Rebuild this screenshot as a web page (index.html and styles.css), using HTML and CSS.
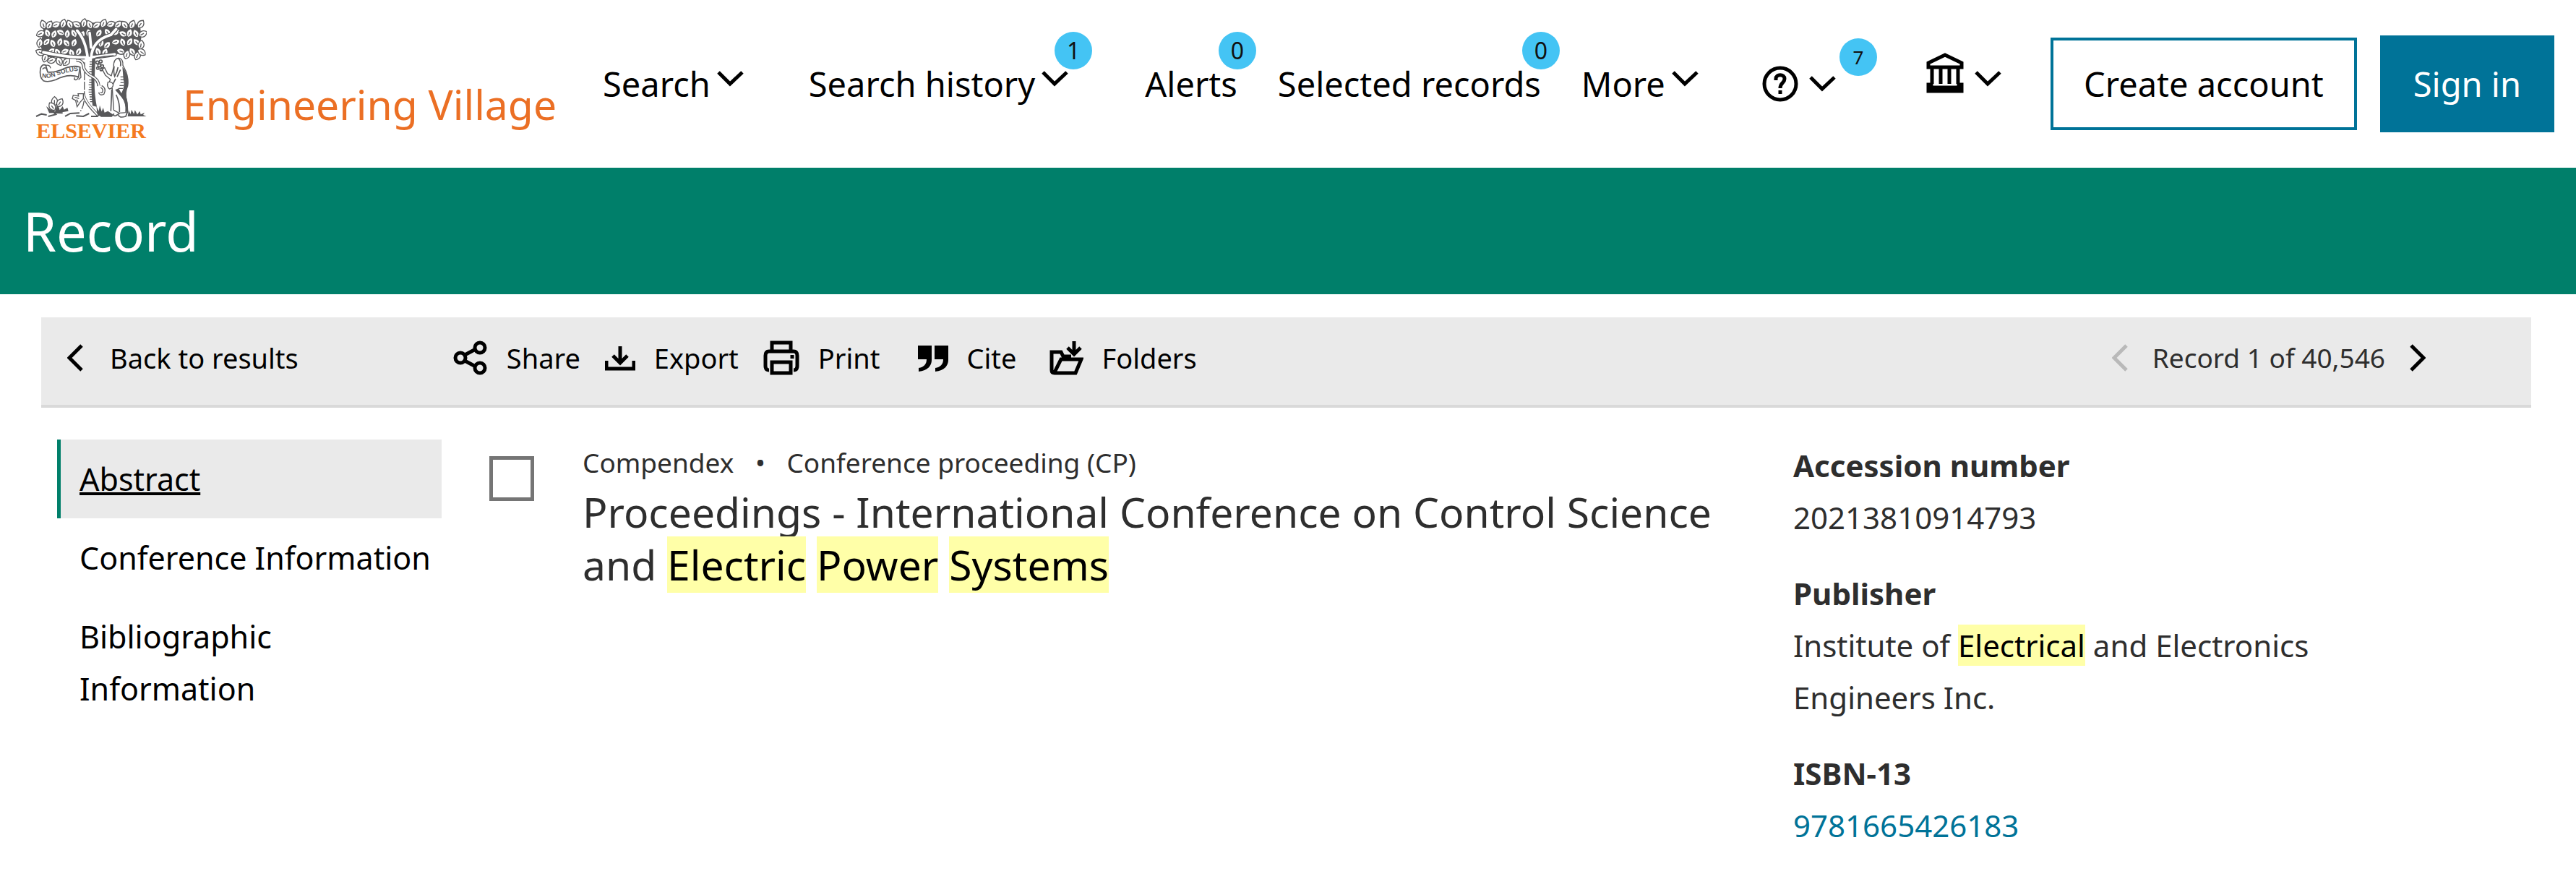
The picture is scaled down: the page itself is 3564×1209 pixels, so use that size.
FILE: index.html
```
<!DOCTYPE html>
<html lang="en">
<head>
    <meta charset="UTF-8">
    <meta name="viewport" content="width=device-width, initial-scale=1.0">
    <title>Record - Engineering Village</title>
    <link rel="stylesheet" href="styles.css">
</head>
<body>

    <header class="header">
        <a class="brand" href="#">
            <span class="logo">
                <svg class="tree" viewBox="27 38 462 412" aria-hidden="true">
                    <defs>
                        <path id="leaf" d="M0 -20 C17 -8 17 8 0 18 C-16 8 -16 -8 0 -20 Z M0 -6 L0 10" fill="#fff" stroke="#58585a" stroke-width="4"/>
                        <path id="banner-line" d="M54 285 Q84 290 120 276 T200 257"/>
                    </defs>
                    <!-- crown -->
                    <path d="M62 66 L110 62 L150 58 L230 56 L310 58 L350 64 L430 62 L462 66 L466 124 L458 150 L464 184 L446 196 L420 188 L384 190 L350 184 L270 196 L190 200 L150 206 L100 200 L66 200 L56 180 L48 150 L56 110 Z" fill="#58585a"/>
                    <g>
                        <use href="#leaf" transform="translate(60 66) rotate(-18)"/>
                        <use href="#leaf" transform="translate(84 68) rotate(30)"/>
                        <use href="#leaf" transform="translate(112 66) rotate(65)"/>
                        <use href="#leaf" transform="translate(142 62) rotate(18)"/>
                        <use href="#leaf" transform="translate(170 65) rotate(-28)"/>
                        <use href="#leaf" transform="translate(199 66) rotate(-60)"/>
                        <use href="#leaf" transform="translate(228 60) rotate(12)"/>
                        <use href="#leaf" transform="translate(252 66) rotate(-25)"/>
                        <use href="#leaf" transform="translate(280 68) rotate(58)"/>
                        <use href="#leaf" transform="translate(309 61) rotate(24)"/>
                        <use href="#leaf" transform="translate(339 64) rotate(70)"/>
                        <use href="#leaf" transform="translate(370 65) rotate(48)"/>
                        <use href="#leaf" transform="translate(398 68) rotate(-35)"/>
                        <use href="#leaf" transform="translate(428 66) rotate(24)"/>
                        <use href="#leaf" transform="translate(463 64) rotate(36)"/>
                        <use href="#leaf" transform="translate(48 103) rotate(65)"/>
                        <use href="#leaf" transform="translate(77 101) rotate(-20)"/>
                        <use href="#leaf" transform="translate(104 105) rotate(26)"/>
                        <use href="#leaf" transform="translate(132 98) rotate(-65)"/>
                        <use href="#leaf" transform="translate(159 104) rotate(8)"/>
                        <use href="#leaf" transform="translate(187 102) rotate(-30)"/>
                        <use href="#leaf" transform="translate(220 108) rotate(25)"/>
                        <use href="#leaf" transform="translate(248 101) rotate(-8)"/>
                        <use href="#leaf" transform="translate(290 101) rotate(32)"/>
                        <use href="#leaf" transform="translate(326 98) rotate(-30)"/>
                        <use href="#leaf" transform="translate(360 97) rotate(55)"/>
                        <use href="#leaf" transform="translate(391 104) rotate(-62)"/>
                        <use href="#leaf" transform="translate(417 101) rotate(20)"/>
                        <use href="#leaf" transform="translate(444 103) rotate(-25)"/>
                        <use href="#leaf" transform="translate(472 104) rotate(62)"/>
                        <use href="#leaf" transform="translate(45 142) rotate(12)"/>
                        <use href="#leaf" transform="translate(73 137) rotate(42)"/>
                        <use href="#leaf" transform="translate(99 144) rotate(-22)"/>
                        <use href="#leaf" transform="translate(128 138) rotate(20)"/>
                        <use href="#leaf" transform="translate(156 142) rotate(-40)"/>
                        <use href="#leaf" transform="translate(187 141) rotate(22)"/>
                        <use href="#leaf" transform="translate(299 142) rotate(12)"/>
                        <use href="#leaf" transform="translate(324 151) rotate(38)"/>
                        <use href="#leaf" transform="translate(360 137) rotate(76)"/>
                        <use href="#leaf" transform="translate(389 139) rotate(-18)"/>
                        <use href="#leaf" transform="translate(418 137) rotate(32)"/>
                        <use href="#leaf" transform="translate(447 139) rotate(-42)"/>
                        <use href="#leaf" transform="translate(465 150) rotate(10)"/>
                        <use href="#leaf" transform="translate(47 181) rotate(-65)"/>
                        <use href="#leaf" transform="translate(67 203) rotate(14)"/>
                        <use href="#leaf" transform="translate(93 176) rotate(52)"/>
                        <use href="#leaf" transform="translate(119 181) rotate(-30)"/>
                        <use href="#leaf" transform="translate(149 176) rotate(68)"/>
                        <use href="#leaf" transform="translate(177 184) rotate(-18)"/>
                        <use href="#leaf" transform="translate(206 178) rotate(24)"/>
                        <use href="#leaf" transform="translate(287 178) rotate(-20)"/>
                        <use href="#leaf" transform="translate(315 181) rotate(25)"/>
                        <use href="#leaf" transform="translate(382 176) rotate(-72)"/>
                        <use href="#leaf" transform="translate(406 190) rotate(18)"/>
                        <use href="#leaf" transform="translate(429 178) rotate(-32)"/>
                        <use href="#leaf" transform="translate(450 194) rotate(22)"/>
                        <use href="#leaf" transform="translate(468 180) rotate(-55)"/>
                        <use href="#leaf" transform="translate(94 213) rotate(68)"/>
                        <use href="#leaf" transform="translate(126 218) rotate(-24)"/>
                        <use href="#leaf" transform="translate(155 220) rotate(40)"/>
                    </g>
                    <!-- branches -->
                    <g fill="none" stroke="#58585a" stroke-width="18" stroke-linecap="round">
                        <path d="M244 205 Q236 130 200 90 M258 205 Q262 130 340 108 L362 84 M240 200 Q180 205 60 180 M264 200 Q320 194 356 188 M258 160 L252 100"/>
                    </g>
                    <g fill="none" stroke="#fff" stroke-width="11" stroke-linecap="round">
                        <path d="M244 205 Q236 130 200 90 M258 205 Q262 130 340 108 L362 84 M240 200 Q180 205 60 180 M264 200 Q320 194 356 188 M258 160 L252 100"/>
                    </g>
                    <!-- trunk -->
                    <path d="M232 200 L268 198 L272 300 Q270 360 276 408 L290 442 L226 438 Q236 400 232 330 Z" fill="#fff"/>
                    <path d="M231 222 L230 345 Q232 400 214 424" fill="none" stroke="#58585a" stroke-width="4" stroke-dasharray="34 6"/>
                    <path d="M262 206 L276 204 L272 300 Q272 360 282 406 L264 402 Q256 330 262 206 Z" fill="#58585a"/>
                    <path d="M252 220H266M252 230H266M250 240H266M252 250H266M250 260H266M250 295H266M250 305H266M248 315H266M250 325H266M248 335H266M248 345H266M250 355H266M252 365H266M252 375H266M254 385H266" stroke="#58585a" stroke-width="4"/>
                    <!-- vine -->
                    <path d="M196 214 Q226 210 228 246 Q238 268 262 280 Q288 292 290 320 M300 322 Q318 332 308 350 Q296 356 294 346" fill="none" stroke="#58585a" stroke-width="13"/>
                    <path d="M196 214 Q226 210 228 246 Q238 268 262 280 Q288 292 292 324" fill="none" stroke="#fff" stroke-width="6"/>
                    <path d="M300 322 Q318 332 308 350 Q296 356 294 346" fill="none" stroke="#fff" stroke-width="5"/>
                    <path d="M226 352 Q232 390 290 444" fill="none" stroke="#58585a" stroke-width="12"/>
                    <path d="M226 354 Q234 388 286 440" fill="none" stroke="#fff" stroke-width="6"/>
                    <path d="M226 352 L204 352 L206 362 L184 358 L180 372 L194 380 L200 406 L212 388 L226 372 Z" fill="#fff" stroke="#58585a" stroke-width="4"/>
                    <path d="M190 366 L208 372 M198 376 L204 388" stroke="#58585a" stroke-width="4"/>
                    <!-- banner -->
                    <path d="M78 262 L70 234 Q56 226 48 246 Q42 284 60 298 Q80 306 112 294 Q160 268 206 282 L212 242 Q190 232 150 246 Q110 266 78 262 Z" fill="#fff" stroke="#58585a" stroke-width="5"/>
                    <path d="M56 250 Q70 236 76 256 M70 234 Q86 230 90 246 M206 282 Q200 300 188 292 L190 284 M212 242 L216 284 L206 294" fill="none" stroke="#58585a" stroke-width="4"/>
                    <text class="banner-text"><textPath href="#banner-line">NON SOLUS</textPath></text>
                    <!-- old man -->
                    <path d="M352 240 Q350 206 374 204 Q392 208 390 234 L404 262 Q414 290 410 320 Q396 350 406 382 L410 430 L374 432 L352 420 L346 330 L328 320 L338 292 L318 276 L304 250 L314 244 L326 268 L342 278 Z" fill="#fff" stroke="#58585a" stroke-width="4" stroke-linejoin="round"/>
                    <path d="M388 240 Q416 276 412 312 Q396 348 410 390 L412 424 L400 430 Q404 390 384 366 L358 336 L372 330 L384 350 Q400 320 392 290 Z" fill="#58585a"/>
                    <path d="M354 238 Q350 262 356 280 Q366 262 370 242 M372 206 Q384 218 380 238 M360 290 Q352 306 346 318 M366 282 L380 252 M344 334 L340 424 M362 356 Q378 390 376 428" fill="none" stroke="#58585a" stroke-width="5"/>
                    <path d="M380 282H394M380 294H394M380 306H394M376 318H394M372 330H390" stroke="#58585a" stroke-width="4"/>
                    <path d="M328 304 Q344 300 350 314 Q348 330 334 332 Q322 322 328 304 Z" fill="#fff" stroke="#58585a" stroke-width="4"/>
                    <!-- grapes -->
                    <g fill="none" stroke="#58585a" stroke-width="5">
                        <circle cx="284" cy="222" r="6"/><circle cx="298" cy="218" r="6"/><circle cx="292" cy="234" r="6"/><circle cx="304" cy="238" r="6"/><circle cx="286" cy="246" r="5"/><circle cx="300" cy="252" r="5"/>
                    </g>
                    <path d="M276 204 Q310 196 352 194" stroke="#58585a" stroke-width="5" fill="none"/>
                    <!-- ground -->
                    <path d="M30 446 L52 436 L74 440 M80 446 L112 438 L104 430 L140 432 M150 446 L172 434 L210 432 M196 444 L226 446 L250 434 M258 446 L286 446" fill="none" stroke="#58585a" stroke-width="6"/>
                    <path d="M284 438 L280 404 L290 424 L294 400 L302 426 L308 410 L314 430 L328 424 L352 440 L344 448 L300 448 Z" fill="#58585a"/>
                    <path d="M410 446 L414 422 L422 436 L426 418 L436 436 L440 420 L450 438 L460 424 L464 438 L480 430 L474 440 L488 446 Z" fill="#58585a"/>
                    <path d="M352 434 Q350 448 362 442 L376 434 M372 440 Q374 454 402 446 L408 430" fill="#fff" stroke="#58585a" stroke-width="5"/>
                    <path d="M84 432 L72 404 L92 420 L96 400 L108 428 L118 388 L128 420 L140 404 L146 418 L160 410 L164 424 L120 432 Z" fill="#58585a"/>
                    <use href="#leaf" transform="translate(106 384)"/>
                    <use href="#leaf" transform="translate(128 390) rotate(30)"/>
                    <use href="#leaf" transform="translate(97 406) rotate(-35)"/>
                </svg>
                <span class="logo-name">ELSEVIER</span>
            </span>
            <span class="product-name">Engineering Village</span>
        </a>

        <nav class="main-nav">
            <button class="nav-item" type="button">Search
                <svg class="chevron" viewBox="0 0 37 22"><path d="M2 2 L18 18 L35 2"/></svg>
            </button>
            <button class="nav-item history" type="button">Search history
                <svg class="chevron" viewBox="0 0 37 22"><path d="M2 2 L18 18 L35 2"/></svg>
                <span class="badge badge-history">1</span>
            </button>
            <a class="nav-item alerts" href="#">Alerts<span class="badge">0</span></a>
            <a class="nav-item selected" href="#">Selected records<span class="badge">0</span></a>
            <button class="nav-item more" type="button">More
                <svg class="chevron" viewBox="0 0 37 22"><path d="M2 2 L18 18 L35 2"/></svg>
            </button>
        </nav>

        <div class="account-nav">
            <button class="nav-item help" type="button" aria-label="Help">
                <svg class="help-icon" viewBox="0 0 50 50">
                    <circle cx="25" cy="25" r="22"/>
                    <path d="M19 20 V18 C19 11 31 11 31 18 C31 24 25 23 25 31"/>
                    <path d="M25 34 V39"/>
                </svg>
                <svg class="chevron" viewBox="0 0 37 22"><path d="M2 2 L18 18 L35 2"/></svg>
                <span class="badge badge-help">7</span>
            </button>
            <button class="nav-item institution" type="button" aria-label="Institution">
                <svg class="bank-icon" viewBox="0 0 52 56">
                    <path d="M3 20 V14 L26 3 L49 14 V20 Z M8 22 V43 M20 22 V43 M32 22 V43 M44 22 V43 M3 53 V44 H7 V48 H45 V44 H49 V53 Z"/>
                </svg>
                <svg class="chevron" viewBox="0 0 37 22"><path d="M2 2 L18 18 L35 2"/></svg>
            </button>
            <button class="btn btn-outline" type="button">Create account</button>
            <button class="btn btn-primary" type="button">Sign in</button>
        </div>
    </header>

    <div class="title-band">
        <h1>Record</h1>
    </div>

    <div class="toolbar">
        <a class="tool back" href="#">
            <svg class="arrow" viewBox="0 0 22 38"><path d="M20 2 L3 19 L20 36"/></svg>
            Back to results
        </a>
        <div class="tools">
            <button class="tool" type="button">
                <svg class="tool-icon" viewBox="0 0 48 48">
                    <circle cx="10" cy="24" r="7"/><circle cx="37" cy="10" r="7"/><circle cx="37" cy="38" r="7"/>
                    <path d="M16 20 L31 12 M16 28 L31 36"/>
                </svg>
                Share
            </button>
            <button class="tool" type="button">
                <svg class="tool-icon" viewBox="0 0 42 48">
                    <path d="M2 28 V39 H40 V28 M21 8 V31 M11 21 L21 31 L31 21"/>
                </svg>
                Export
            </button>
            <button class="tool" type="button">
                <svg class="tool-icon" viewBox="0 0 50 48">
                    <path d="M12 14 V3 H38 V14 M8 41 Q3 41 3 35 V21 Q3 15 8 15 H42 Q47 15 47 21 V35 Q47 41 42 41 M12 30 H38 V45 H12 Z"/>
                    <path d="M40 20 V25"/>
                </svg>
                Print
            </button>
            <button class="tool cite" type="button">
                <svg class="tool-icon cite-icon" viewBox="0 0 42 48">
                    <path d="M0 7 H19 V27 C19 36 12 42 1 43 V38 C8 37 12 33 12 26 H0 Z M23 7 H42 V27 C42 36 35 42 24 43 V38 C31 37 35 33 35 26 H23 Z"/>
                </svg>
                Cite
            </button>
            <button class="tool folders" type="button">
                <svg class="tool-icon" viewBox="0 0 48 48">
                    <path d="M31 22 H20 L17 16 H4 V41 Q4 45 8 45 H37 L45 26 H17 L8 44 M35 1 V19 M26 10 L35 19 L44 10"/>
                </svg>
                Folders
            </button>
        </div>
        <div class="pager">
            <button class="pager-btn" type="button" aria-label="Previous record" disabled>
                <svg class="arrow" viewBox="0 0 22 38"><path d="M20 2 L3 19 L20 36"/></svg>
            </button>
            <span>Record 1 of 40,546</span>
            <button class="pager-btn" type="button" aria-label="Next record">
                <svg class="arrow" viewBox="0 0 22 38"><path d="M2 2 L19 19 L2 36"/></svg>
            </button>
        </div>
    </div>

    <main class="content">
        <nav class="side-nav">
            <a class="side-link active" href="#">Abstract</a>
            <a class="side-link" href="#">Conference Information</a>
            <a class="side-link" href="#">Bibliographic Information</a>
        </nav>

        <article class="record">
            <input class="record-check" type="checkbox" id="record1">
            <div>
                <p class="source">Compendex <span class="dot">•</span> Conference proceeding (CP)</p>
                <h2><label for="record1">Proceedings - International Conference on Control Science and <mark>Electric</mark> <mark>Power</mark> <mark>Systems</mark></label></h2>
            </div>
        </article>

        <dl class="details">
            <dt>Accession number</dt>
            <dd>20213810914793</dd>
            <dt>Publisher</dt>
            <dd>Institute of <mark>Electrical</mark> and Electronics Engineers Inc.</dd>
            <dt>ISBN-13</dt>
            <dd><a href="#">9781665426183</a></dd>
        </dl>
    </main>

</body>
</html>
```
FILE: styles.css
```
* {
    box-sizing: border-box;
}
body {
    margin: 0;
    background-color: #fff;
    color: #2e2e2e;
    font-family: 'Noto Sans', 'Open Sans', sans-serif;
    font-size: 42px;
    line-height: 72px;
}
a {
    color: inherit;
    text-decoration: none;
}
button {
    padding: 0;
    border: none;
    background: none;
    color: inherit;
    font: inherit;
    cursor: pointer;
}
svg {
    display: block;
    flex: none;
    fill: none;
    stroke: currentColor;
    stroke-width: 5px;
}
mark {
    background-color: #ffffa8;
    color: #000;
}

/* Header */
.header {
    display: flex;
    align-items: center;
    height: 232px;
    padding: 0 30px 0 49px;
    color: #000;
    font-size: 47px;
    white-space: nowrap;
}
.brand {
    display: flex;
    align-items: flex-end;
    gap: 50px;
    padding-bottom: 8px;
}
.logo {
    display: flex;
    flex-direction: column;
    align-items: center;
    width: 154px;
}
.tree {
    width: 154px;
    stroke: none;
}
.banner-text {
    fill: #58585a;
    font-family: 'Liberation Sans', sans-serif;
    font-size: 26px;
    font-weight: bold;
}
.logo-name {
    color: #f47b20;
    font-family: 'Liberation Serif', serif;
    font-size: 30px;
    font-weight: bold;
    line-height: 36px;
}
.product-name {
    color: #eb6f24;
    font-size: 57px;
    line-height: 110px;
}
.main-nav {
    display: flex;
    align-items: center;
    margin-left: 64px;
}
.nav-item {
    position: relative;
    display: flex;
    align-items: center;
    gap: 9px;
}
.chevron {
    width: 37px;
    height: 22px;
    margin-bottom: 14px;
}
.history {
    margin-left: 90px;
}
.alerts {
    margin-left: 106px;
}
.selected {
    margin-left: 56px;
}
.more {
    margin-left: 56px;
}
.badge {
    position: absolute;
    top: -36px;
    right: -26px;
    width: 52px;
    height: 52px;
    border-radius: 50%;
    background-color: #44c4f4;
    color: #111;
    font-size: 32px;
    line-height: 52px;
    text-align: center;
}
.badge-history {
    right: -33px;
}
.account-nav {
    display: flex;
    align-items: center;
    margin-left: auto;
}
.help {
    gap: 15px;
    margin-right: 125px;
}
.help .chevron {
    margin-bottom: 0;
}
.help-icon {
    width: 50px;
}
.badge-help {
    top: -38px;
    right: -57px;
    font-size: 26px;
}
.institution {
    gap: 15px;
    margin-right: 68px;
}
.bank-icon {
    width: 52px;
    margin-bottom: 30px;
}
.btn {
    padding: 24px 42px;
}
.btn-outline {
    margin-right: 32px;
    border: 4px solid #007398;
}
.btn-primary {
    padding: 31px 46px;
    background-color: #007398;
    color: #fff;
}

/* Title band */
.title-band {
    padding: 0 32px;
    background-color: #007f6a;
    color: #fff;
}
.title-band h1 {
    margin: 0;
    font-size: 74px;
    font-weight: normal;
    line-height: 175px;
}

/* Toolbar */
.toolbar {
    display: flex;
    align-items: center;
    height: 125px;
    margin: 32px 62px 0 57px;
    padding: 0 146px 10px 36px;
    border-bottom: 4px solid #d9d9d9;
    background-color: #eaeaea;
    font-size: 38px;
    white-space: nowrap;
}
.tool {
    display: flex;
    align-items: center;
    gap: 26px;
    color: #000;
}
.back {
    gap: 37px;
}
.arrow {
    width: 22px;
    height: 38px;
}
.tools {
    display: flex;
    gap: 34px;
    margin-left: 214px;
}
.tool-icon {
    height: 48px;
}
.cite {
    margin-left: 18px;
}
.folders {
    margin-left: 10px;
}
.cite-icon {
    fill: currentColor;
    stroke: none;
}
.pager {
    display: flex;
    align-items: center;
    gap: 34px;
    margin-left: auto;
    font-size: 37px;
}
.pager-btn {
    color: #000;
}
.pager-btn:disabled {
    color: #b9b9b9;
}

/* Content */
.content {
    display: grid;
    grid-template-columns: 532px 1fr 900px;
    gap: 66px;
    padding: 44px 183px 0 79px;
}
.side-nav {
    font-size: 43px;
}
.side-link {
    display: block;
    padding: 19px 5px 18px 26px;
    border-left: 5px solid transparent;
    color: #000;
}
.side-link.active {
    border-left-color: #007f6a;
    background-color: #eaeaea;
    text-decoration: underline;
    text-decoration-thickness: 4px;
}
.record {
    display: flex;
    align-items: flex-start;
    gap: 67px;
}
.record-check {
    appearance: none;
    flex: none;
    width: 62px;
    height: 62px;
    margin: 23px 0 0;
    border: 5px solid #757575;
    background-color: #fff;
}
.record-check:checked {
    background-color: #007398;
}
.source {
    margin: 0;
    font-size: 37px;
    line-height: 64px;
}
.dot {
    margin: 0 20px;
}
.record h2 {
    margin: 0;
    font-size: 57px;
    font-weight: normal;
    line-height: 73px;
}
.details {
    margin: 0;
}
.details dt {
    font-weight: bold;
}
.details dd {
    margin: 0 0 33px;
}
.details a {
    color: #007398;
}
```
